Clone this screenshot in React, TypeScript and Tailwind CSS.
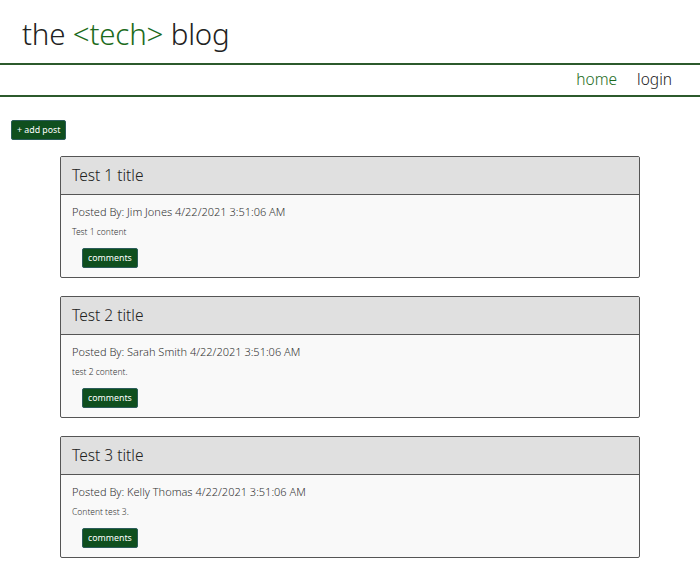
import React from "react";

const posts = [
  { title: "Test 1 title", author: "Jim Jones", content: "Test 1 content" },
  { title: "Test 2 title", author: "Sarah Smith", content: "test 2 content." },
  { title: "Test 3 title", author: "Kelly Thomas", content: "Content test 3." },
];

export default function App() {
  return (
    <div className="min-h-[572px] bg-white text-[#222]" style={{ fontFamily: '"Noto Sans", Lato, sans-serif' }}>
      <header className="h-[63px] flex items-center pl-[22px]">
        <h1 className="text-[29.5px] font-light leading-none tracking-[-0.2px] pt-[4px]">
          the <span className="text-[#1c6b1c]">&lt;tech&gt;</span> blog
        </h1>
      </header>
      <nav className="h-[34px] border-y-2 border-[#2c5a2c] flex items-center justify-end gap-[20px] pr-[28px] text-[15.5px] font-light">
        <a className="text-[#1c6b1c]">home</a>
        <a>login</a>
      </nav>
      <div className="flex pl-[11px] pt-[23px]">
        <button className="h-[20px] px-[5px] bg-[#0f4f1e] border border-[#2b5c5a] rounded-[2px] text-white text-[8.8px] leading-none">
          + add post
        </button>
      </div>
      <main className="flex flex-col gap-[18px] mx-[60px] mt-[16px]">
        {posts.map((p) => (
          <section key={p.title} className="h-[122px] border border-[#555] rounded-[2px] bg-[#f9f9f9] flex flex-col overflow-hidden">
            <div className="h-[38px] shrink-0 bg-[#e0e0e0] border-b border-[#555] flex items-center pl-[11px] text-[15.5px] font-light">
              {p.title}
            </div>
            <div className="pl-[11px] pt-[9px] flex flex-col">
              <p className="text-[11px] font-light leading-[16px] text-[#333]">
                Posted By: {p.author} 4/22/2021 3:51:06 AM
              </p>
              <p className="text-[8.5px] font-light mt-[6px] leading-[12px] text-[#333]">{p.content}</p>
              <div className="flex pl-[10px] mt-[10px]">
                <button className="h-[20px] px-[5px] bg-[#0f4f1e] border border-[#2b5c5a] rounded-[2px] text-white text-[8.8px] leading-none">
                  comments
                </button>
              </div>
            </div>
          </section>
        ))}
      </main>
    </div>
  );
}
